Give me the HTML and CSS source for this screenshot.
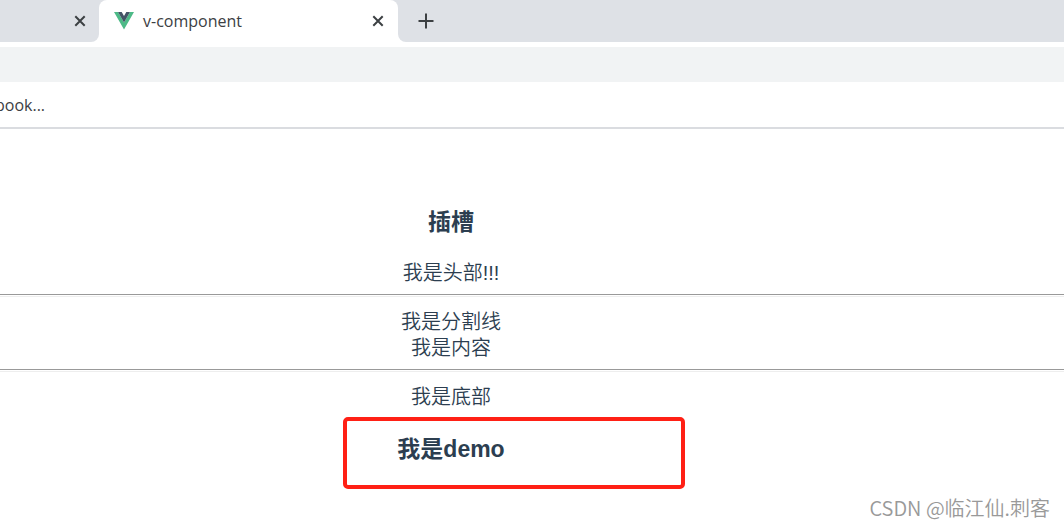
FILE: index.html
```
<!DOCTYPE html>
<html lang="zh-CN">
<head>
<meta charset="utf-8">
<title>v-component</title>
<link rel="stylesheet" href="styles.css">
</head>
<body>
<header class="browser">
  <div class="tabs">
    <div class="tab tab-before">
      <button class="icon-button" aria-label="关闭标签页"><svg width="12" height="12" viewBox="0 0 12 12"><path d="M1.3 1.3 10.7 10.7M10.7 1.3 1.3 10.7"/></svg></button>
    </div>
    <div class="tab tab-active">
      <svg class="logo" width="20" height="18" viewBox="0 0 20 18" aria-hidden="true"><path fill="#4dba87" d="M0 0h4l6 10.4L16 0h4L10 17.5z"/><path fill="#435466" d="M4 0h3.7L10 4l2.3-4H16l-6 10.4z"/></svg>
      <span class="tab-title">v-component</span>
      <button class="icon-button" aria-label="关闭标签页"><svg width="12" height="12" viewBox="0 0 12 12"><path d="M1.3 1.3 10.7 10.7M10.7 1.3 1.3 10.7"/></svg></button>
    </div>
    <div class="tab tab-after">
      <button class="icon-button" aria-label="新标签页"><svg width="16" height="16" viewBox="0 0 16 16"><path d="M8 .5v15M.5 8h15"/></svg></button>
    </div>
  </div>
  <div class="address"></div>
  <nav class="bookmarks"><a class="bookmark" href="#">book...</a></nav>
</header>
<main class="page">
  <h3 class="heading">插槽</h3>
  <div class="text">我是头部!!!</div>
  <hr class="rule">
  <div class="text">我是分割线</div>
  <div class="text">我是内容</div>
  <hr class="rule">
  <div class="text">我是底部</div>
  <div class="demo">
    <h3 class="heading">我是demo</h3>
    <div class="highlight"></div>
  </div>
</main>
<div class="watermark">CSDN @临江仙.刺客</div>
</body>
</html>
```
FILE: styles.css
```
* {
  box-sizing: border-box;
}

body {
  position: relative;
  min-height: 100vh;
  margin: 0;
  overflow-x: hidden;
  background: #fff;
  color: #2c3e50;
  font-family: "Liberation Sans", "Noto Sans CJK SC", sans-serif;
}

.tabs {
  display: flex;
  height: 42px;
  background: linear-gradient(#dee1e6 50%, #fff 50%);
}

.tab {
  display: flex;
  align-items: center;
  background: #dee1e6;
}

.tab-before {
  width: 99px;
  justify-content: flex-end;
  padding-right: 13px;
  border-bottom-right-radius: 8px;
}

.tab-active {
  width: 299px;
  padding: 0 14px 0 15px;
  background: #fff;
  border-radius: 8px 8px 0 0;
}

.tab-after {
  flex: 1;
  padding-left: 20px;
  border-bottom-left-radius: 8px;
}

.tab-title {
  flex: 1;
  margin-left: 9px;
  color: #3c4043;
  font: 16px/24px "Open Sans", "Noto Sans", sans-serif;
}

.icon-button {
  display: flex;
  padding: 0;
  border: 0;
  background: none;
}

.icon-button svg {
  fill: none;
  stroke: #3c4043;
  stroke-width: 2;
}

.address {
  height: 35px;
  margin-top: 5px;
  background: #f1f3f4;
}

.bookmarks {
  display: flex;
  align-items: center;
  height: 47px;
  border-bottom: 2px solid #dadce0;
}

.bookmark {
  margin-left: -5px;
  color: #3c4043;
  font: 16px/24px "Open Sans", "Noto Sans", sans-serif;
  text-decoration: none;
}

.page {
  padding-top: 80px;
  text-align: center;
}

.heading,
.text {
  margin: 0;
  padding-right: 162px;
  line-height: 26px;
}

.heading {
  font-size: 23px;
}

.text {
  font-size: 20px;
  font-weight: 350;
}

.heading + .text {
  margin-top: 25px;
}

.rule {
  height: 3px;
  margin: 8px 0 12px;
  border: 0;
  border-top: 1px solid #999;
  border-bottom: 1px solid #eee;
}

.demo {
  position: relative;
  margin-top: 26px;
}

.highlight {
  position: absolute;
  top: -19px;
  left: calc(50% - 189px);
  width: 342px;
  height: 72px;
  border: 4px solid #ff2015;
  border-radius: 5px;
}

.watermark {
  position: absolute;
  right: 14px;
  bottom: 5px;
  color: #999;
  font: 350 20px/26px "Noto Sans CJK SC", sans-serif;
}
```
